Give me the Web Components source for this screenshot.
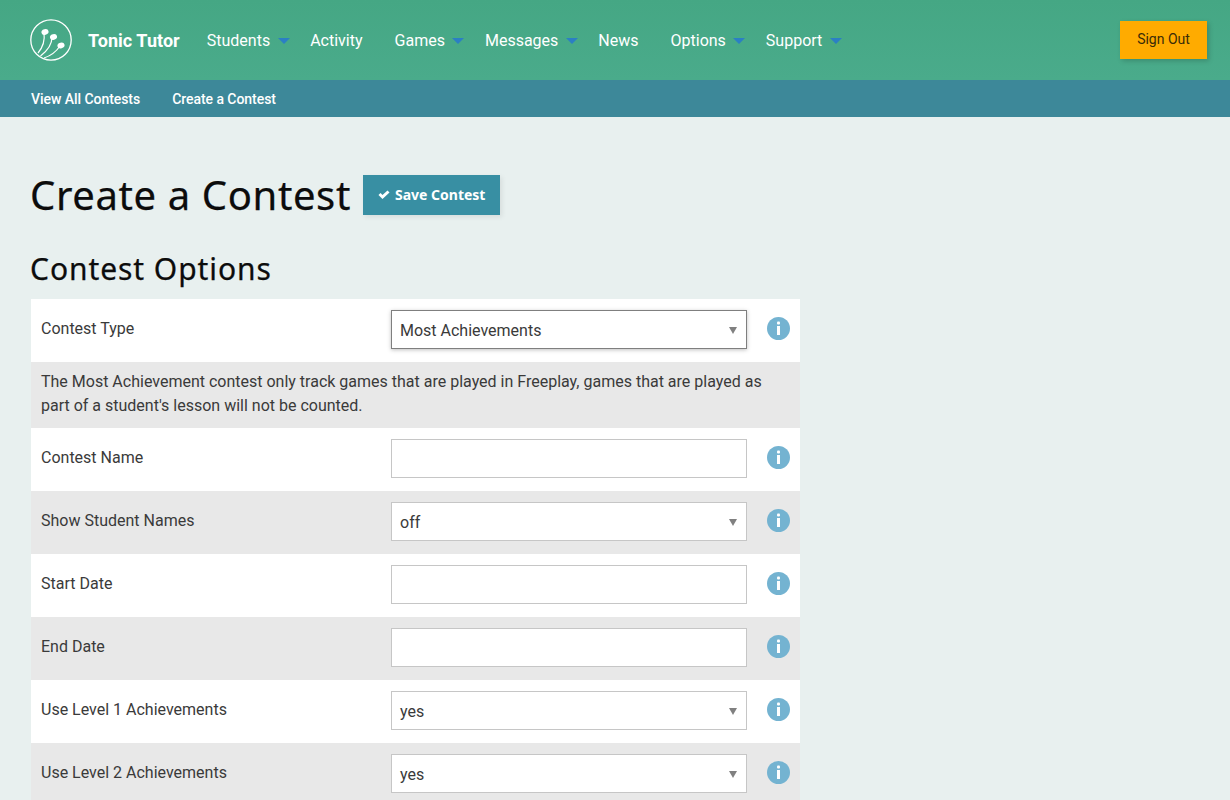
<!DOCTYPE html>
<html lang="en">
<head>
<meta charset="utf-8">
<title>Create a Contest</title>
<style>
    html, body{
        margin: 0;
        padding: 0;
        background: #e8f0ef;
        font-family: Roboto, "Liberation Sans", sans-serif;
        color: #222;
    }
</style>
</head>
<body>
<app-header>
    <nav-item caret>Students</nav-item>
    <nav-item>Activity</nav-item>
    <nav-item caret>Games</nav-item>
    <nav-item caret>Messages</nav-item>
    <nav-item>News</nav-item>
    <nav-item caret>Options</nav-item>
    <nav-item caret>Support</nav-item>
</app-header>
<sub-nav>
    <span>View All Contests</span>
    <span>Create a Contest</span>
</sub-nav>
<page-main>
    <page-title>Create a Contest</page-title>
    <section-title>Contest Options</section-title>
    <form-row label="Contest Type" kind="select" value="Most Achievements" focused></form-row>
    <form-note>The Most Achievement contest only track games that are played in Freeplay, games that are played as part of a student's lesson will not be counted.</form-note>
    <form-row label="Contest Name" kind="input"></form-row>
    <form-row label="Show Student Names" kind="select" value="off" shaded></form-row>
    <form-row label="Start Date" kind="input"></form-row>
    <form-row label="End Date" kind="input" shaded></form-row>
    <form-row label="Use Level 1 Achievements" kind="select" value="yes"></form-row>
    <form-row label="Use Level 2 Achievements" kind="select" value="yes" shaded></form-row>
</page-main>
<script>
class AppHeader extends HTMLElement{
    constructor(){
        super();
        this.shadow = this.attachShadow({mode: 'open'});
    }
    connectedCallback(){
        this.shadow.innerHTML =
        `
        <style>
            :host{
                display: flex;
                align-items: center;
                height: 80px;
                padding: 0 23px 0 30px;
                background: linear-gradient(#45a784, #4aab8b);
                color: #fff;
            }
            svg{
                display: block;
                flex: none;
            }
            .brand{
                margin: 0 27px 0 16px;
                font-size: 18px;
                font-weight: 700;
                letter-spacing: 0.05px;
                white-space: nowrap;
            }
            nav{
                display: flex;
                flex: 1;
                align-items: center;
            }
            button{
                width: 87px;
                height: 38px;
                border: 0;
                padding: 0 0 2px;
                background: #ffab00;
                color: #3a2c08;
                font: 400 14px Roboto, sans-serif;
                box-shadow: 2px 2px 5px rgba(0,0,0,.18);
            }
        </style>
        <svg width="42" height="42" viewBox="0 0 42 42" fill="none" stroke="#fff">
            <circle cx="21" cy="21" r="20.2" stroke-width="1.3"/>
            <path stroke-width="1.2" d="M14 14C15 21 13 28 8 34M22 18C22 25 17 32 10.500 37M30 27C26 33 20 37 14 39"/>
            <ellipse cx="15" cy="13" rx="3.600" ry="2.800" fill="#fff" stroke="none" transform="rotate(-15 15 13)"/>
            <ellipse cx="23.500" cy="18" rx="3.600" ry="2.800" fill="#fff" stroke="none" transform="rotate(-15 23.500 18)"/>
            <ellipse cx="31" cy="26.500" rx="3.600" ry="2.800" fill="#fff" stroke="none" transform="rotate(-15 31 26.500)"/>
        </svg>
        <span class="brand">Tonic Tutor</span>
        <nav><slot></slot></nav>
        <button type="button">Sign Out</button>
        `;
    }
}
customElements.define('app-header', AppHeader);

class NavItem extends HTMLElement{
    constructor(){
        super();
        this.shadow = this.attachShadow({mode: 'open'});
    }
    connectedCallback(){
        let caret = this.hasAttribute('caret') ? '<i></i>' : '';
        this.shadow.innerHTML =
        `
        <style>
            :host{
                display: flex;
                align-items: center;
                margin-right: 32px;
                font-size: 16px;
                white-space: nowrap;
            }
            :host([caret]){
                margin-right: 20.500px;
            }
            i{
                margin: 2px 0 0 7.500px;
                border: 6px solid transparent;
                border-top: 6px solid #2b7fc4;
                border-bottom: 0;
            }
        </style>
        <slot></slot>${caret}
        `;
    }
}
customElements.define('nav-item', NavItem);

class SubNav extends HTMLElement{
    constructor(){
        super();
        this.shadow = this.attachShadow({mode: 'open'});
    }
    connectedCallback(){
        this.shadow.innerHTML =
        `
        <style>
            :host{
                display: flex;
                align-items: center;
                gap: 32px;
                height: 37px;
                padding-left: 31px;
                background: #3d8899;
                color: #fff;
                font-size: 14px;
                font-weight: 500;
                letter-spacing: -0.05px;
            }
        </style>
        <slot></slot>
        `;
    }
}
customElements.define('sub-nav', SubNav);

class PageMain extends HTMLElement{
    constructor(){
        super();
        this.shadow = this.attachShadow({mode: 'open'});
    }
    connectedCallback(){
        this.shadow.innerHTML =
        `
        <style>
            :host{
                display: block;
                width: 770px;
                padding: 53px 0 0 30px;
            }
        </style>
        <slot></slot>
        `;
    }
}
customElements.define('page-main', PageMain);

class PageTitle extends HTMLElement{
    constructor(){
        super();
        this.shadow = this.attachShadow({mode: 'open'});
    }
    connectedCallback(){
        this.shadow.innerHTML =
        `
        <style>
            :host{
                display: flex;
                align-items: center;
                gap: 12px;
                height: 48px;
                color: #0c0c0c;
                font: 400 40px "Noto Sans", "Open Sans", sans-serif;
                letter-spacing: 0.62px;
                -webkit-text-stroke: 0.25px #0c0c0c;
            }
            button{
                display: flex;
                align-items: center;
                gap: 5px;
                height: 40px;
                margin-top: 2px;
                border: 0;
                padding: 0 14.500px 2px 15px;
                background: #388fa3;
                color: #fff;
                font: 700 14px "Noto Sans", "Open Sans", sans-serif;
                letter-spacing: 0;
                -webkit-text-stroke: 0;
                box-shadow: 2px 2px 5px rgba(0,0,0,.08);
            }
            svg{
                display: block;
                margin-top: 2px;
            }
        </style>
        <slot></slot>
        <button type="button">
            <svg width="12" height="10" viewBox="0 0 12 10"><path fill="#fff" d="M0.500 5L2.500 3L4.500 5L9.500 0.500L11.500 2.500L4.500 9Z"/></svg>
            Save Contest
        </button>
        `;
    }
}
customElements.define('page-title', PageTitle);

class SectionTitle extends HTMLElement{
    constructor(){
        super();
        this.shadow = this.attachShadow({mode: 'open'});
    }
    connectedCallback(){
        this.shadow.innerHTML =
        `
        <style>
            :host{
                display: block;
                height: 52px;
                margin-top: 29px;
                color: #0c0c0c;
                font: 400 30px/44px "Noto Sans", "Open Sans", sans-serif;
                letter-spacing: 0.93px;
                -webkit-text-stroke: 0.25px #0c0c0c;
            }
        </style>
        <slot></slot>
        `;
    }
}
customElements.define('section-title', SectionTitle);

class FormRow extends HTMLElement{
    constructor(){
        super();
        this.shadow = this.attachShadow({mode: 'open'});
    }
    connectedCallback(){
        let kind = this.getAttribute('kind');
        let value = this.getAttribute('value') || '';
        let arrow = kind == 'select' ? '<i></i>' : '';
        this.shadow.innerHTML =
        `
        <style>
            :host{
                display: grid;
                grid-template-columns: 350px 356px 1fr;
                align-items: center;
                height: 63px;
                margin-left: 1px;
                padding-left: 10px;
                box-sizing: border-box;
                background: #fff;
                color: #3a3a3a;
                font-size: 16px;
            }
            :host([shaded]){
                background: #e8e8e8;
            }
            .label{
                margin-top: -5px;
            }
            .field{
                display: flex;
                align-items: center;
                justify-content: space-between;
                height: 39px;
                margin-bottom: 2px;
                padding: 2px 9px 0 8px;
                box-sizing: border-box;
                border: 1px solid #c6c6c6;
                background: #fff;
            }
            :host([focused]) .field{
                border-color: #7f7f7f;
                box-shadow: 0 1px 4px rgba(0,0,0,.25);
            }
            i{
                border: 4px solid transparent;
                border-top: 7px solid #808080;
                border-bottom: 0;
            }
            svg{
                display: block;
                justify-self: end;
                margin: 0 10px 4px 0;
            }
        </style>
        <span class="label">${this.getAttribute('label')}</span>
        <div class="field"><span>${value}</span>${arrow}</div>
        <svg width="23" height="23" viewBox="0 0 23 23">
            <circle cx="11.500" cy="11.500" r="11.500" fill="#74b3d1"/>
            <rect x="10" y="4.500" width="3" height="3" rx="1" fill="#fff"/>
            <rect x="10" y="9" width="3" height="9" fill="#fff"/>
        </svg>
        `;
    }
}
customElements.define('form-row', FormRow);

class FormNote extends HTMLElement{
    constructor(){
        super();
        this.shadow = this.attachShadow({mode: 'open'});
    }
    connectedCallback(){
        this.shadow.innerHTML =
        `
        <style>
            :host{
                display: block;
                margin-left: 1px;
                padding: 8px 30px 10px 10px;
                background: #e8e8e8;
                color: #3a3a3a;
                font-size: 16px;
                line-height: 24px;
            }
        </style>
        <slot></slot>
        `;
    }
}
customElements.define('form-note', FormNote);
</script>
</body>
</html>
